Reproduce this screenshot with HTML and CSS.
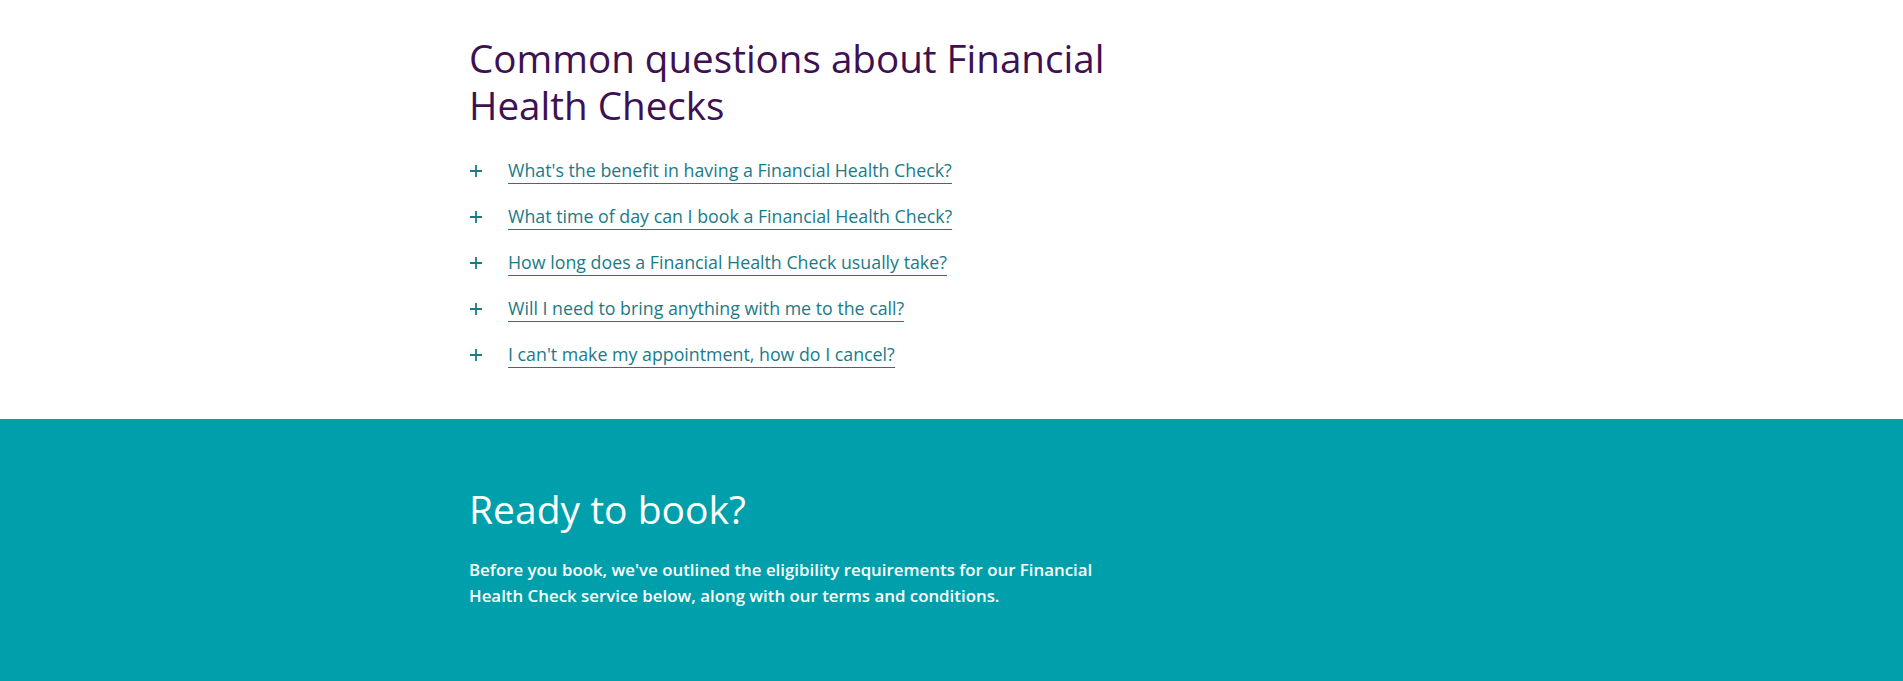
FILE: index.html
```html
<!DOCTYPE html>
<html lang="en">
<head>
<meta charset="utf-8">
<title>Financial Health Checks</title>
<link rel="stylesheet" href="styles.css">
</head>
<body>
<section class="faq">
  <div class="container">
    <h2 class="faq-title">Common questions about Financial Health Checks</h2>
    <ul class="faq-list">
      <li class="faq-item"><svg class="plus" viewBox="0 0 14 14" width="14" height="14"><path d="M7 1v12M1 7h12" stroke="currentColor" stroke-width="1.8"/></svg><a class="faq-link" href="#">What's the benefit in having a Financial Health Check?</a></li>
      <li class="faq-item"><svg class="plus" viewBox="0 0 14 14" width="14" height="14"><path d="M7 1v12M1 7h12" stroke="currentColor" stroke-width="1.8"/></svg><a class="faq-link" href="#">What time of day can I book a Financial Health Check?</a></li>
      <li class="faq-item"><svg class="plus" viewBox="0 0 14 14" width="14" height="14"><path d="M7 1v12M1 7h12" stroke="currentColor" stroke-width="1.8"/></svg><a class="faq-link" href="#">How long does a Financial Health Check usually take?</a></li>
      <li class="faq-item"><svg class="plus" viewBox="0 0 14 14" width="14" height="14"><path d="M7 1v12M1 7h12" stroke="currentColor" stroke-width="1.8"/></svg><a class="faq-link" href="#">Will I need to bring anything with me to the call?</a></li>
      <li class="faq-item"><svg class="plus" viewBox="0 0 14 14" width="14" height="14"><path d="M7 1v12M1 7h12" stroke="currentColor" stroke-width="1.8"/></svg><a class="faq-link" href="#">I can't make my appointment, how do I cancel?</a></li>
    </ul>
  </div>
</section>
<section class="book">
  <div class="container">
    <h2 class="book-title">Ready to book?</h2>
    <p class="book-text">Before you book, we've outlined the eligibility requirements for our Financial Health Check service below, along with our terms and conditions.</p>
  </div>
</section>
</body>
</html>
```

FILE: styles.css
```css
* { box-sizing: border-box; }
html, body { margin: 0; padding: 0; }
body {
  font-family: "Open Sans", Lato, Arial, sans-serif;
  background: #ffffff;
}
.container {
  margin-left: 469px;
  width: 660px;
}
.faq {
  padding-top: 35px;
  height: 419px;
}
.faq-title {
  margin: 0;
  font-size: 38.6px;
  line-height: 47px;
  font-weight: 400;
  color: #3d1152;
}
.faq-list {
  list-style: none;
  margin: 29px 0 0;
  padding: 0;
  display: flex;
  flex-direction: column;
  gap: 20px;
}
.faq-item {
  display: flex;
  align-items: flex-start;
  color: #1b7a88;
}
.plus {
  flex: none;
  margin-top: 6px;
  margin-right: 25px;
  color: #1b7a88;
}
.faq-link {
  font-size: 17.8px;
  line-height: 24px;
  color: #1b7a88;
  text-decoration: none;
  padding-bottom: 1px;
  border-bottom: 1px solid #1b7a88;
}
.book {
  background: #009fac;
  color: #ffffff;
  padding-top: 66px;
  height: 262px;
}
.book-title {
  margin: 0;
  font-size: 39px;
  line-height: 48px;
  font-weight: 400;
}
.book-text {
  margin: 24px 0 0;
  font-size: 16.85px;
  line-height: 26px;
  font-weight: 600;
}
```
